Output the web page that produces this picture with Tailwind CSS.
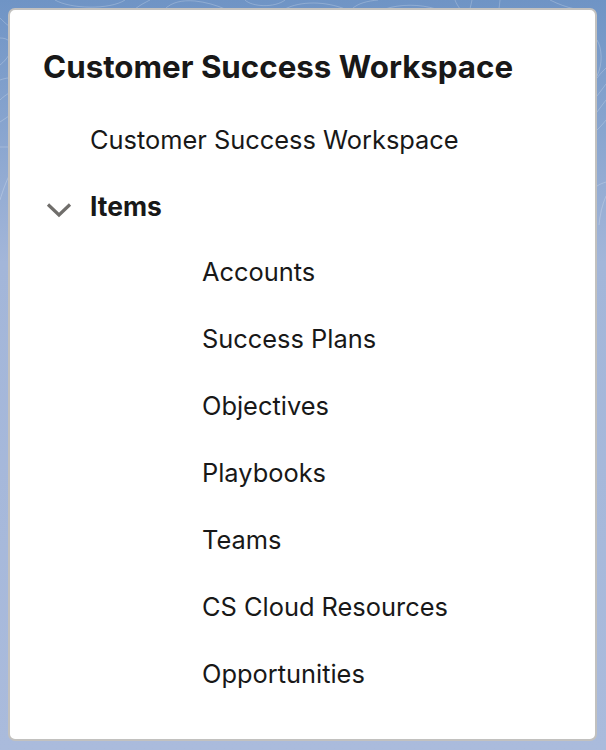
<!DOCTYPE html>
<html lang="en">
<head>
    <meta charset="UTF-8">
    <meta name="viewport" content="width=device-width, initial-scale=1.0">
    <title>Customer Success Workspace</title>
    <script src="https://cdn.jsdelivr.net/npm/@tailwindcss/browser@4"></script>
</head>
<body class="relative h-[750px] overflow-hidden bg-[linear-gradient(#6f94c5_0%,#a3b6d9_35%,#aabbdc_100%)] p-[8px] font-['Inter',sans-serif] text-[#181818]">
    <!-- faint contour lines behind the card -->
    <svg class="absolute inset-0 w-[606px] h-[750px]" viewBox="0 0 606 750" fill="none" stroke="#ffffff" stroke-opacity="0.22" stroke-width="1">
        <path d="M55 0 C70 9 110 10 125 0" />
        <path d="M135 9 C140 5 146 2 150 0" />
        <path d="M165 9 C172 2 182 0 195 1 C205 2 216 5 225 9" />
        <path d="M245 0 C252 7 275 8 285 0" />
        <path d="M285 9 C300 1 325 1 345 9" />
        <path d="M352 9 C358 3 368 1 378 0" />
        <path d="M385 9 C400 4 420 4 436 9" />
        <path d="M455 0 C456 3 458 6 460 9" />
        <path d="M470 9 C471 6 471 3 472 0" />
        <path d="M500 0 C500 3 499 6 499 9" />
        <path d="M550 0 C558 4 566 7 575 9" />
        <path d="M0 18 C3 21 6 24 9 26" />
        <path d="M0 38 C4 38 7 39 9 41" />
        <path d="M0 65 C4 62 7 58 9 55" />
        <path d="M0 80 C3 79 6 78 9 78" />
        <path d="M0 100 C3 97 6 95 9 93" />
        <path d="M0 122 C3 120 6 118 9 116" />
        <path d="M0 147 L9 147" />
        <path d="M0 200 C3 190 6 182 9 176" />
        <path d="M597 40 C602 48 603 64 597 76" />
        <path d="M597 78 C600 74 603 71 606 68" />
        <path d="M597 96 C600 92 603 88 606 84" />
        <path d="M597 112 C600 108 603 104 606 100" />
        <path d="M597 130 C600 127 603 124 606 120" />
        <path d="M597 186 C600 184 603 183 606 182" />
        <path d="M606 196 C602 205 600 215 599 225" />
    </svg>

    <div class="relative h-[733px] w-[589px] rounded-[7px] border-2 border-[#c2c1bf] bg-white pl-[33px] pt-[35px]">
        <h1 class="text-[31.3px] leading-[44px] font-bold">Customer Success Workspace</h1>

        <div class="mt-[34px] pl-[47px] text-[25.4px] leading-[34px]">Customer Success Workspace</div>

        <div class="mt-[32px] flex h-[34px] items-center">
            <svg class="ml-[3px] mt-[7px] w-[26px] h-[16px]" viewBox="0 0 26 16" fill="none" stroke="#706e6b" stroke-width="3.2">
                <path d="M2 2.5 L13 13 L24 2.5" />
            </svg>
            <span class="ml-[18px] pt-px text-[26.4px] font-bold">Items</span>
        </div>

        <ul class="mt-[32px] flex flex-col gap-[33px] pl-[159px] text-[25.4px] leading-[34px]">
            <li>Accounts</li>
            <li>Success Plans</li>
            <li>Objectives</li>
            <li>Playbooks</li>
            <li>Teams</li>
            <li>CS Cloud Resources</li>
            <li>Opportunities</li>
        </ul>
    </div>
</body>
</html>
